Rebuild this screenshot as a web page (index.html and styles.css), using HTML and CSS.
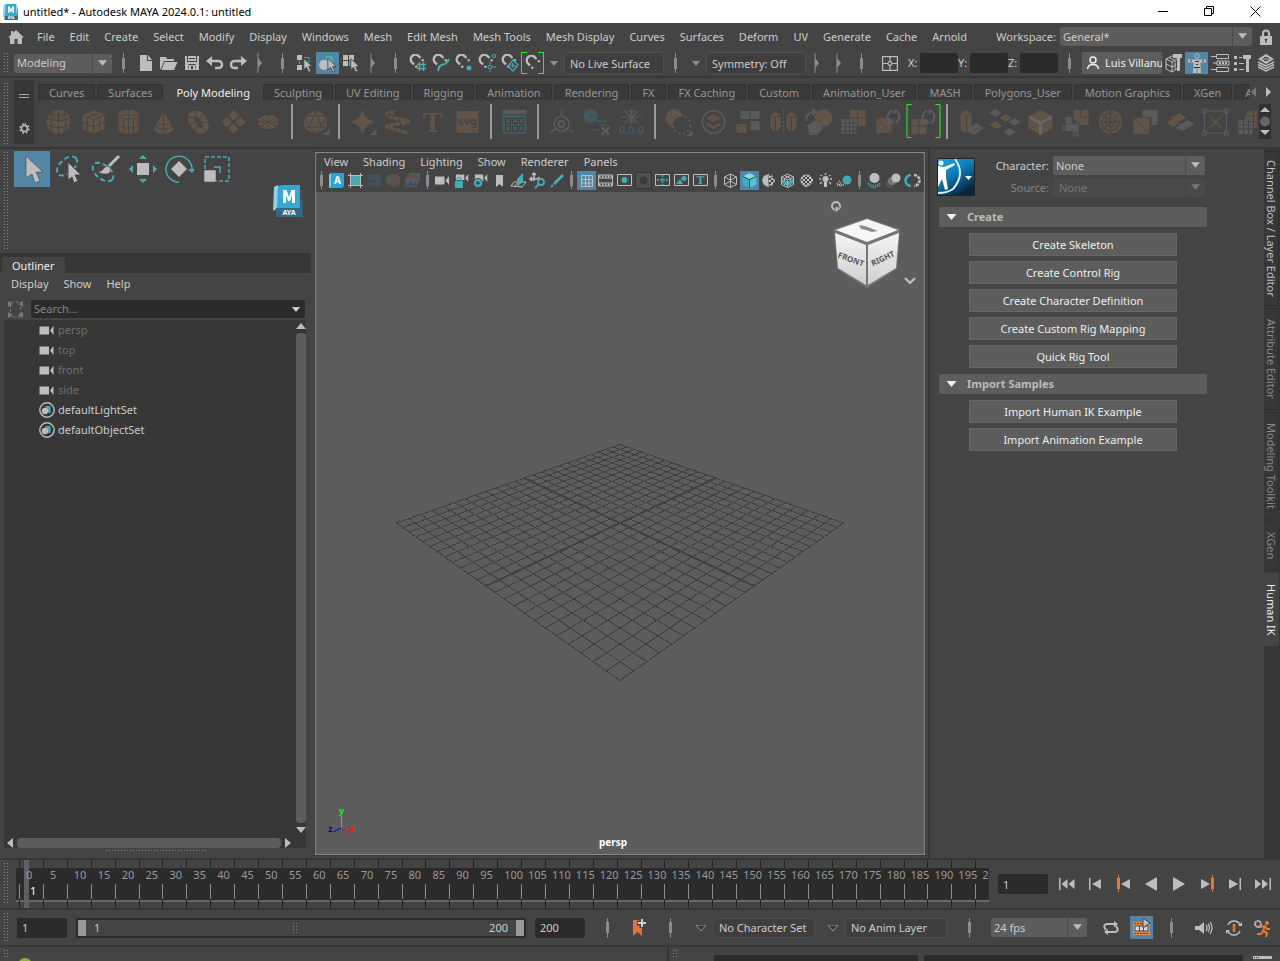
FILE: index.html
```
<!DOCTYPE html>
<html lang="en">
<head>
    <meta charset="UTF-8">
    <meta name="viewport" content="width=device-width, initial-scale=1.0">
    <title>untitled* - Autodesk MAYA 2024.0.1: untitled</title>
    <link rel="stylesheet" href="styles.css">
</head>
<body>
    <!-- Shared symbols -->
    <svg class="symbols" aria-hidden="true">
        <symbol id="down" viewBox="0 0 10 6"><path d="M0 0H10L5 6Z"/></symbol>
        <symbol id="marker" viewBox="0 0 6 20"><path d="M1 0v20" stroke="#8c8c8c"/><path d="M1 5l4 5-4 5z" fill="#8c8c8c"/></symbol>
        <symbol id="magnet" viewBox="0 0 18 18">
            <path class="ls" stroke-width="2.400" d="M5 10.500L3 8.500A4.600 4.600 0 0 1 9.500 2L11.500 4M6.500 12l1.500 1.500M13 5.500l1.500 1.500"/>
        </symbol>
        <symbol id="cursor" viewBox="0 0 12 18"><path class="lt" stroke="#444" stroke-width="1" d="M1 .5V14L4.2 11.2 6.8 17 9.4 15.8 6.8 10.3H11Z"/></symbol>
        <symbol id="camera" viewBox="0 0 15 9"><path class="lt" d="M0 0.500H9.500V8.500H0ZM10.500 4.500L14 0V9Z"/></symbol>
        <symbol id="set" viewBox="0 0 16 16"><circle class="ls" cx="8" cy="8" r="7.2" stroke-width="1.4"/><path class="tl" d="M6 4h5.500v7H9.500Z"/><circle class="lt" cx="6" cy="9" r="3.200"/></symbol>
        <symbol id="maya" viewBox="0 0 30 32">
            <path fill="#8fd0e3" d="M1 2L5 0V23L0 26Z"/><path fill="#35a7d0" d="M5 1l3-1h19v23H4Z"/><path fill="#336a87" d="M3 23H27l2-21 1 30H3Z"/>
            <path fill="#fff" d="M10 18V5h3.500L16 12l2.500-7H22V18H19V10l-2 6h-2l-2-6v8Z"/>
            <text x="16" y="29.500" text-anchor="middle" font-size="7" font-weight="700" fill="#fff">AYA</text>
        </symbol>
        <symbol id="sync" viewBox="0 0 16 16"><path class="ls" stroke-width="2" d="M6 2A7 7 0 0 0 5 14M10 14A7 7 0 0 0 11 2"/><path class="lt" d="M3 14.500l5 1V10ZM13 1.500l-5-1V6Z"/></symbol>
    </svg>

    <!-- Title bar -->
    <header class="titlebar">
        <svg class="app-logo"><use href="#maya"/></svg>
        <span class="title">untitled* - Autodesk MAYA 2024.0.1: untitled</span>
        <button class="win-btn" aria-label="Minimize"><svg width="11" height="11"><path d="M0 5.500H10" stroke="#000"/></svg></button>
        <button class="win-btn" aria-label="Restore"><svg width="11" height="11"><path d="M.5 2.500h7v7h-7zM2.500 2V.5h7v7H8" fill="none" stroke="#000"/></svg></button>
        <button class="win-btn" aria-label="Close"><svg width="11" height="11"><path d="M.5 .5l10 10M10.500 .5l-10 10" stroke="#000"/></svg></button>
    </header>

    <!-- Main menu -->
    <nav class="menubar">
        <a href="#" class="home" aria-label="Home"><svg width="16" height="14"><path class="lt" d="M8 0L16 7.500H14V14H9.500V9H6.500V14H2V7.500H0L3 4.700V1H5V2.800Z"/></svg></a>
        <button>File</button><button>Edit</button><button>Create</button><button>Select</button><button>Modify</button><button>Display</button><button>Windows</button><button>Mesh</button><button>Edit Mesh</button><button>Mesh Tools</button><button>Mesh Display</button><button>Curves</button><button>Surfaces</button><button>Deform</button><button>UV</button><button>Generate</button><button>Cache</button><button>Arnold</button>
        <label class="workspace-label" for="workspace">Workspace:</label>
        <div class="combo workspace">
            <select id="workspace"><option>General*</option></select>
            <svg class="combo-arrow"><use href="#down"/></svg>
        </div>
        <svg class="lock" width="12" height="16"><path class="ls" stroke-width="2" d="M3 8V4.500a3 3 0 0 1 6 0V8"/><path class="lt" d="M0 7H12V16H0Z"/><path d="M4.500 10h3l-1 2v2h-1v-2z" fill="#333"/></svg>
    </nav>

    <!-- Status line -->
    <div class="status-line">
        <span class="grip"></span>
        <div class="combo mode">
            <select aria-label="Menu set"><option>Modeling</option></select>
            <svg class="combo-arrow"><use href="#down"/></svg>
        </div>
        <span class="sep"></span>
        <button class="cell" aria-label="New scene"><svg width="14" height="16"><path class="lt" d="M1 0H8V6H13V16H1ZM9 0l4 5H9Z"/></svg></button>
        <button class="cell" aria-label="Open scene"><svg width="18" height="14"><path class="lt" d="M0 13V1H6L7 3H14V5H4L1 13ZM4.500 6H17.500L14 14H1.500Z"/></svg></button>
        <button class="cell" aria-label="Save scene"><svg width="14" height="14"><path class="lt" d="M0 0H2V6H12V0H14V14H0ZM3 0H11V5H3Z"/><path fill="#444" d="M3.500 8h7v5h-7zM4 2h6v1H4z"/><path class="lt" d="M4 9h6v4H8v-3H6v3H4z"/></svg></button>
        <button class="cell" aria-label="Undo"><svg width="18" height="14"><path class="ls" stroke-width="2.400" d="M5 5H12Q16 5 16 8.500T12 12H9"/><path class="lt" d="M6 0V10L0 5Z"/></svg></button>
        <button class="cell" aria-label="Redo"><svg width="18" height="14"><path class="ls" stroke-width="2.400" d="M13 5H6Q2 5 2 8.500T6 12H9"/><path class="lt" d="M12 0V10L18 5Z"/></svg></button>
        <svg class="marker"><use href="#marker"/></svg>
        <span class="sep"></span>
        <button class="cell" aria-label="Select by hierarchy"><svg width="18" height="19"><path class="lt" d="M1 1H6V6H1ZM1 11H6V16H1Z"/><path class="ts" d="M8 3.500H13V9M3.500 7v3"/><use href="#cursor" x="7" y="4" width="10" height="15"/></svg></button>
        <button class="cell active" aria-label="Select by object"><svg width="19" height="19"><path class="tl" d="M8 2h7v10H8z"/><circle class="lt" cx="6" cy="11" r="5"/><use href="#cursor" x="9" y="4" width="10" height="15"/></svg></button>
        <button class="cell" aria-label="Select by component"><svg width="18" height="19"><path class="lt" d="M1 1H6V6H1ZM7 1h5v5H7zM1 7h5v5H1z"/><path class="tl" d="M7 7h5v5H7z"/><use href="#cursor" x="8" y="4" width="10" height="15"/></svg></button>
        <svg class="marker"><use href="#marker"/></svg>
        <span class="sep"></span>
        <button class="cell" aria-label="Snap to grids"><svg width="18" height="18"><use href="#magnet"/><path class="ts" stroke-width="1.500" d="M10.500 8v9M14.500 8v9M8 10.500h9M8 14.500h9"/></svg></button>
        <button class="cell" aria-label="Snap to curves"><svg width="18" height="18"><use href="#magnet"/><path class="ts" stroke-width="2" d="M6 17Q7 11 11 10.500T17 5"/></svg></button>
        <button class="cell" aria-label="Snap to points"><svg width="18" height="18"><use href="#magnet"/><circle class="tl" cx="14" cy="14" r="2.500"/></svg></button>
        <button class="cell" aria-label="Snap to projected center"><svg width="18" height="18"><use href="#magnet"/><circle class="ts" cx="16" cy="2" r="1.700"/><circle class="ts" cx="12" cy="13" r="2"/><path class="ts" d="M12 8v2M12 16v2M7 13h2M15 13h3"/></svg></button>
        <button class="cell" aria-label="Snap to view planes"><svg width="18" height="18"><use href="#magnet"/><path class="ts" stroke-width="1.200" d="M12 6l5 5-5 6-5-5zM12 9v5M9 11l6 1"/></svg></button>
        <button class="cell live" aria-label="Make live"><svg width="18" height="18"><use href="#magnet" x="1" y="1"/></svg></button>
        <svg class="drop"><use href="#down"/></svg>
        <input class="field" type="text" value="No Live Surface" aria-label="Live surface" readonly>
        <span class="sep"></span>
        <svg class="drop"><use href="#down"/></svg>
        <input class="field" type="text" value="Symmetry: Off" aria-label="Symmetry" readonly>
        <svg class="marker"><use href="#marker"/></svg>
        <svg class="marker"><use href="#marker"/></svg>
        <span class="sep"></span>
        <button class="cell wide" aria-label="Input line mode"><svg width="16" height="15"><path class="ls" stroke-width="1.200" d="M.6 .6H15.400V14.400H.6ZM8 1V5M8 10v4M1 7.500H5.500M10.500 7.500H15M8 5L10.500 7.500 8 10 5.500 7.500Z"/></svg></button>
        <label class="axis" for="ix">X:</label><input id="ix" class="num" type="text">
        <label class="axis" for="iy">Y:</label><input id="iy" class="num" type="text">
        <label class="axis" for="iz">Z:</label><input id="iz" class="num" type="text">
        <span class="sep"></span>
        <div class="status-right">
            <button class="user"><svg width="14" height="14"><circle cx="7" cy="4" r="3" fill="none" stroke="#eee" stroke-width="1.500"/><path d="M1.500 13Q2 8.500 7 8.500T12.500 13" fill="none" stroke="#eee" stroke-width="1.500"/></svg>Luis Villanueva</button>
            <button class="cell" aria-label="Modeling toolkit"><svg width="18" height="18"><path class="ls" d="M1 5l6-3 6 2v10l-6 4-6-3zM1 5l6 3v10M7 8l5-3M4 3.500l6 3v9M1 10l6 3 4-2"/><path class="lt" d="M8 0h9v4h-2v13h-3V4H8z"/></svg></button>
            <button class="cell active" aria-label="Human IK"><svg width="18" height="20"><circle class="ls" cx="9" cy="3" r="2.200"/><path class="lt" d="M0 6.500H18V9.500H12.500V14L13 20H9.500V14H8.500V20H5L5.500 14V9.500H0Z"/><path fill="#333" d="M2 7.500h2v1H2zM14 7.500h2v1h-2zM7 8h4v1H7zM8 11h2v1H8zM6 14h6v1H6z"/></svg></button>
            <button class="cell" aria-label="Attribute editor"><svg width="18" height="18"><path class="ls" d="M0 2.500h5M5.500 .5h12v4h-12zM2 9h4M6 7h12v4H6zM0 15.500h5M5.500 13.500h12v4h-12z"/><path class="lt" d="M8 8h2v2H8zM11 8h2v2h-2zM14 8h2v2h-2z"/></svg></button>
            <button class="cell" aria-label="Tool settings"><svg width="17" height="17"><path class="lt" d="M0 1h3v3H0zM5 2h3v1H5zM9 0h8v4h-2v13h-3V4H9zM0 7h3v3H0zM5 8h5v1H5zM0 13h3v3H0zM5 14h5v1H5z"/></svg></button>
            <button class="cell" aria-label="Channel box"><svg width="18" height="18"><path class="ls" stroke-width="1.500" d="M1 8l8 4 8-4M1 10.500l8 4 8-4M1 13l8 4 8-4"/><path class="lt" d="M9 0l8 5-8 5-8-5z"/><path d="M5 5h8M7 3.500h4M7 6.500h4" stroke="#444"/></svg></button>
        </div>
    </div>

    <!-- Shelf -->
    <div class="shelf">
        <span class="grip"></span>
        <div class="shelf-side">
            <svg width="10" height="6"><path d="M0 1.500H10M0 4.500H10" stroke="#aaa"/></svg>
            <svg width="11" height="11"><circle class="ls" cx="5.500" cy="5.500" r="3" stroke-width="1.500"/><path class="ls" stroke-width="1.600" stroke-dasharray="1.600 2" d="M5.500 1a4.500 4.500 0 1 1 0 9 4.500 4.500 0 1 1 0-9"/></svg>
        </div>
        <div class="shelf-main">
            <div class="shelf-tabs">
                <div class="tab-strip">
                    <button>Curves</button><button>Surfaces</button><button class="current">Poly Modeling</button><button>Sculpting</button><button>UV Editing</button><button>Rigging</button><button>Animation</button><button>Rendering</button><button>FX</button><button>FX Caching</button><button>Custom</button><button>Animation_User</button><button>MASH</button><button>Polygons_User</button><button>Motion Graphics</button><button>XGen</button><button>Arnold</button>
                </div>
                <svg class="tab-arrows" width="24" height="10"><path fill="#777" d="M6 0V10L1 5Z"/><path class="lt" d="M16 0V10l5-5Z"/></svg>
            </div>
            <div class="shelf-row">
                <div class="shelf-icons">
                    <svg viewBox="0 0 24 24"><circle class="or" cx="12" cy="12" r="12"/><path class="cut" d="M0 8Q12 13 24 8M0 15Q12 20 24 15M2 4Q12 7 22 4M12 0V24M7 0Q2 12 7 24M17 0Q22 12 17 24"/></svg>
                    <svg viewBox="0 0 24 24"><path class="or" d="M12 0L23 5V19L12 24 1 19V5Z"/><path class="cut" d="M1 5l11 5 11-5M12 10V24M1 12l11 5 11-5M6 2.500l12 5V21M18 2.500l-12 5V21"/></svg>
                    <svg viewBox="0 0 24 24"><path class="or" d="M2 5Q2 0 12 0T22 5V19Q22 24 12 24T2 19Z"/><path class="cut" d="M2 5Q4 9 12 9T22 5M2 14Q4 18 12 18T22 14M12 0V24M7 8.500V24M17 8.500V24M4 5H20"/></svg>
                    <svg viewBox="0 0 24 24"><path class="or" d="M12 1L22 19Q20 24 12 24T2 19Z"/><path class="cut" d="M12 0V24M6 13Q12 17 18 13M4 17Q12 22 20 17"/></svg>
                    <svg viewBox="0 0 24 24"><path class="ring" d="M7 4Q14 2 18 11T14 21Q10 20 6 13T7 4Z" stroke-width="6"/><path class="cut" d="M2 8l7-1M8 0l2 7M17 4l-4 5M22 12l-7 1M19 20l-5-4M9 22l2-6M3 15l6-3"/></svg>
                    <svg viewBox="0 0 24 24"><path class="or" d="M12 0L24 12 12 24 0 12Z"/><path class="cut" stroke-width="2" d="M6 6L18 18M18 6L6 18"/></svg>
                    <svg viewBox="0 0 24 24"><ellipse class="or" cx="12" cy="12" rx="11" ry="7"/><path class="cut" d="M3 7L21 17M21 7L3 17M0 12H8M16 12h8M12 5v4M12 15v4"/></svg>
                    <span class="bar"></span>
                    <svg viewBox="0 0 24 24"><path class="or" d="M12 0L23 6V18L12 24 1 18V6Z"/><path class="cut" d="M12 0L6 17H18ZM1 6h22L18 17l5 1M1 6l5 11-5 1M6 17l6 7 6-7"/><path class="lt" d="M26 19v6h-7z"/></svg>
                    <span class="bar"></span>
                    <svg viewBox="0 0 24 24"><path class="or" d="M12 -1Q14 10 25 12 14 14 12 25 10 14 -1 12 10 10 12 -1Z"/><path class="lt" d="M26 19v6h-7z"/></svg>
                    <svg viewBox="0 0 24 24"><path class="ring" d="M9 3Q2 1 1 4T12 9 23 12 12 14 1 16 12 20 20 24" stroke-width="3.500" stroke-dasharray="5 1"/></svg>
                    <svg viewBox="0 0 24 24"><text class="or serif" x="12" y="22" text-anchor="middle" font-size="30" font-weight="700">T</text></svg>
                    <svg viewBox="0 0 24 24"><path class="or" d="M1 1h22v22H1z"/><text x="12" y="15" text-anchor="middle" font-size="11" font-weight="700" fill="#444">svg</text></svg>
                    <span class="bar"></span>
                    <svg viewBox="0 0 24 24"><path class="tl" d="M0 5h24v19H0z"/><path class="lt" d="M0 0h24v4H0z"/><path d="M3 8.500h5v5H3zM10 8.500h5v5h-5zM17 8.500h4v5h-4zM3 16h5v5H3zM10 16h5v5h-5zM17 16h4v5h-4z" fill="#555" stroke="#3b3b3b"/></svg>
                    <span class="bar"></span>
                    <svg viewBox="0 0 24 24"><path class="ts" stroke-width="2" d="M12 -1V7M8 18l-8 4M16 18l8 4"/><circle class="ls" cx="12" cy="14" r="7.500" stroke-width="1.500"/><circle class="ls" cx="12" cy="14" r="3" stroke-width="2"/></svg>
                    <svg viewBox="0 0 24 24"><circle class="tl" cx="6" cy="6" r="7"/><path d="M6 2v5h4" fill="none" stroke="#444"/><path class="ts" stroke-width="1.500" d="M12 11h11M15 15h7M6 20h8"/><path class="ls" stroke-width="2" d="M17 17l8 8M25 17l-8 8"/></svg>
                    <svg viewBox="0 0 24 24"><path class="ls" stroke-width="1.200" d="M12 -1V14M2 7H22M5 1l14 12M19 1L5 13M9 0l3 3 3-3M9 13l3-3 3 3"/><text class="tl" x="12" y="24" text-anchor="middle" font-size="11" font-weight="700">0,0,0</text></svg>
                    <span class="bar"></span>
                    <svg viewBox="0 0 24 24"><circle class="or" cx="8" cy="8" r="9"/><circle cx="15" cy="15" r="9" fill="#444" stroke="#5a5a5a" stroke-width="1.500" stroke-dasharray="3 2"/><path class="lt" d="M26 20v6h-6z"/></svg>
                    <svg viewBox="0 0 24 24"><circle class="ls" cx="12" cy="12" r="11.200" stroke-width="1.500"/><path class="or" d="M12 4l8 4-8 4-8-4z"/><path class="or" d="M12 19l-8-4 3-2 5 3 5-3 3 2z"/></svg>
                    <svg viewBox="0 0 24 24"><path class="lt" d="M4 1h9v8H4zM14 1h9v8h-9zM14 11h9v9h-9z"/><path class="or" d="M0 14h10v9H0z"/></svg>
                    <svg viewBox="0 0 24 24"><path class="or" d="M-1 5l5-3 5 3v13l-5 4-5-4zM15 5l5-3 5 3v13l-5 4-5-4z"/><path class="cut" d="M-1 5l5 3 5-3M4 8v14M15 5l5 3 5-3M20 8v14"/><path class="ls" stroke-dasharray="2 2" d="M12 -1V24"/></svg>
                    <svg viewBox="0 0 24 24"><circle class="or" cx="17" cy="8" r="9"/><path class="lt" d="M1 15l6-4 7 3 2 5-5 6H3z"/><path class="ls" stroke-width="2" d="M0 11Q-1 3 7 2"/><path class="lt" d="M6 -2l5 4-5 4z"/></svg>
                    <svg viewBox="0 0 24 24"><path class="or" d="M8 0h16v16H8z"/><path class="cut" d="M16 0v16M8 8h16"/><path class="lt" d="M0 9h15v15H0z"/><path class="cut" d="M4 9v15M8 9v15M12 9v15M0 13h15M0 17h15M0 21h15"/></svg>
                    <svg viewBox="0 0 24 24"><path class="or" d="M0 8h15v15H0z"/><path class="cut" d="M0 8l15 15"/><use href="#sync" x="9" y="-1" width="16" height="16"/></svg>
                    <svg viewBox="0 0 24 24"><path class="or" d="M0 9h15v15H0z"/><path class="cut" d="M7.500 9v15M0 16h15"/><use href="#sync" x="9" y="-1" width="16" height="16"/><path d="M0 -5.500H-4.500V27.500H0M24 -5.500h4.500V27.500h-4.500" fill="none" stroke="#1f1"/></svg>
                    <span class="bar"></span>
                    <svg viewBox="0 0 24 24"><path class="or" d="M2 3l6-3 5 3v17l-6 3-5-3z"/><path class="cut" d="M2 3l6 3 5-3M8 6v17"/><path class="lt" d="M13 16l5-3 7 5-9 7-6-3z"/><path class="cut" d="M14 22l7-6"/></svg>
                    <svg viewBox="0 0 24 24"><path class="lt" d="M-4 3l6-4 6 4-6 4zM15 12l6-4 6 4-6 4zM10 22l6-4 6 4-6 4z"/><path class="or" d="M6 8l6-4 6 4-6 4zM-4 15l6-4 7 5-6 3z"/></svg>
                    <svg viewBox="0 0 24 24"><path class="or" d="M12 0L24 6V18L12 25 0 18V6Z"/><path stroke="#666" stroke-width="3" fill="none" d="M1 7l11 6 11-6M12 13V25"/></svg>
                    <svg viewBox="0 0 24 24"><path class="or" d="M10 0h15v15H15L10 10z"/><path class="lt" d="M2 7h6v6h7v8H2z"/><path class="cut" d="M17 0v7h8M8 8l9 7M0 14h15"/><path class="ls" d="M-1 16h4v4h-4zM10 22h4v4h-4z"/></svg>
                    <svg viewBox="0 0 24 24"><circle class="ring" cx="12" cy="12" r="10.500" stroke-width="2.500"/><circle class="or" cx="12" cy="12" r="8"/><path class="cut" d="M12 0V24M0 12H24M3.500 3.500l17 17M20.500 3.500l-17 17"/><circle class="cut" cx="12" cy="12" r="5"/></svg>
                    <svg viewBox="0 0 24 24"><path class="or" d="M0 8h16v16H0z"/><path class="cut" d="M0 8l16 16"/><path class="lt" d="M9 0h15v15h-6V7H9z"/></svg>
                    <svg viewBox="0 0 24 24"><path class="or" d="M2 8l9-5 7 5-8 4zM-2 13l7-4 5 4-5 4z"/><path class="lt" d="M7 18l12-8 7 4-12 7z"/></svg>
                    <svg viewBox="0 0 24 24"><path class="ls" d="M1 1h22v22H1zM-1 -1h4v4h-4zM21 -1h4v4h-4zM-1 21h4v4h-4zM21 21h4v4h-4z"/><path class="ring" d="M6 6l12 12M18 6L6 18" stroke-width="1.500"/><path class="or" d="M10 10h4v4h-4z"/></svg>
                    <svg viewBox="0 0 24 24"><circle class="or" cx="15" cy="9" r="9"/><path class="lt" d="M0 10h14v14H0z"/><path class="cut" d="M5 10v14M10 10v14M0 15h14M0 19h14M15 0v18M6 6h18M8 12h16"/></svg>
                </div>
                <svg class="shelf-scroll" width="12" height="35"><path class="lt" d="M1 8H11L6 3ZM1 26H11L6 31Z"/><circle cx="6" cy="17.500" r="5" fill="#666"/></svg>
            </div>
        </div>
    </div>

    <main class="workarea">
        <!-- Tool box and outliner -->
        <section class="left">
            <div class="toolbox">
                <span class="grip"></span>
                <div class="tools">
                    <button class="tool active" aria-label="Select"><svg width="18" height="28"><path class="lt" stroke="#333" stroke-width=".5" d="M3 1L20 17H13L17 26 12 28 9 19 3 23Z"/></svg></button>
                    <button class="tool" aria-label="Lasso"><svg width="28" height="28"><ellipse class="ts" cx="12" cy="11" rx="12" ry="7" stroke-width="2" stroke-dasharray="5 3" transform="rotate(-42 12 11)"/><path class="lt" stroke="#444" d="M13 7L26 20H20L23 26 19 28 17 22 13 25Z"/></svg></button>
                    <button class="tool" aria-label="Paint select"><svg width="28" height="28"><ellipse class="ts" cx="11" cy="17" rx="12" ry="7" stroke-width="2" stroke-dasharray="5 3" transform="rotate(38 11 17)"/><path d="M17 11L27 1" stroke="#bdbdbd" stroke-width="3"/><path class="lt" stroke="#444" stroke-width=".5" d="M18 12Q20 19 14 19 9 19 6 17 11 16 12 13 15 10 18 12Z"/></svg></button>
                    <button class="tool" aria-label="Move"><svg width="28" height="28"><path class="lt" d="M8 8h12v12H8z"/><path class="tl" d="M14 0l4 4h-8zM14 28l4-4h-8zM0 14l4-4v8zM28 14l-4-4v8z"/></svg></button>
                    <button class="tool" aria-label="Rotate"><svg width="30" height="28"><path class="ts" stroke-width="1.500" d="M14 27.200A13 13 0 1 1 27 15"/><path class="tl" d="M23 14h7l-3 4z"/><path class="lt" d="M14 6l8 8-8 8-8-8z"/></svg></button>
                    <button class="tool" aria-label="Scale"><svg width="26" height="26"><path class="ts" stroke-width="1.500" stroke-dasharray="4 2" d="M1 1h24v24H1z"/><path class="lt" stroke="#444" stroke-width=".5" d="M0 14h12v12H0z"/><path class="ts" stroke-width="1.500" d="M10 11h6v6"/></svg></button>
                </div>
                <svg class="maya-logo"><use href="#maya"/></svg>
            </div>
            <div class="outliner">
                <div class="outliner-head"><button class="outliner-tab">Outliner</button></div>
                <div class="outliner-menu"><button>Display</button><button>Show</button><button>Help</button></div>
                <div class="search-row">
                    <svg width="16" height="17"><path d="M2.500 1h10v15h-10z" fill="none" stroke="#7a7a7a" stroke-dasharray="3 2"/><path fill="#777" d="M0 0l5 3-5 3zM15 0l-5 3 5 3zM0 11l5 3-5 3zM15 11l-5 3 5 3z"/></svg>
                    <div class="search">
                        <input type="text" placeholder="Search..." aria-label="Search">
                        <svg class="search-arrow"><use href="#down"/></svg>
                    </div>
                </div>
                <div class="tree">
                    <div class="tree-body">
                        <ul>
                            <li class="dim"><svg class="cam"><use href="#camera"/></svg>persp</li>
                            <li class="dim"><svg class="cam"><use href="#camera"/></svg>top</li>
                            <li class="dim"><svg class="cam"><use href="#camera"/></svg>front</li>
                            <li class="dim"><svg class="cam"><use href="#camera"/></svg>side</li>
                            <li><svg class="set"><use href="#set"/></svg>defaultLightSet</li>
                            <li><svg class="set"><use href="#set"/></svg>defaultObjectSet</li>
                        </ul>
                        <div class="vscroll"><svg width="10" height="6"><path class="lt" d="M0 6h10L5 0z"/></svg><span class="thumb"></span><svg width="10" height="6"><path class="lt" d="M0 0h10L5 6z"/></svg></div>
                    </div>
                    <div class="hscroll"><svg width="6" height="10"><path class="lt" d="M6 0v10L0 5z"/></svg><span class="thumb"></span><svg width="6" height="10"><path class="lt" d="M0 0v10l6-5z"/></svg></div>
                </div>
                <span class="dots"></span>
            </div>
        </section>

        <!-- Viewport panel -->
        <section class="panel">
            <div class="panel-menu"><button>View</button><button>Shading</button><button>Lighting</button><button>Show</button><button>Renderer</button><button>Panels</button></div>
            <div class="panel-icons">
                <span class="sep"></span>
                <svg viewBox="0 0 19 19"><path fill="#2fa4cf" d="M2 4l2-2h13v13l-2 2H2z"/><path fill="#7fcbe2" d="M2 4l2-2v13l-2 2z"/><text x="10.500" y="13" text-anchor="middle" font-size="10" font-weight="700" fill="#fff">A</text></svg>
                <svg viewBox="0 0 19 19"><path class="tl" d="M5 5h9v9H5z"/><path class="ls" d="M4.500 2v15M14.500 2v15M2 4.500h15M2 14.500h15"/></svg>
                <svg viewBox="0 0 19 19"><path fill="#46505c" d="M3 3h13v13H3z"/><path d="M3 10h7v6" fill="none" stroke="#3a424d"/></svg>
                <svg viewBox="0 0 19 19"><circle cx="9.500" cy="9.500" r="6.500" fill="#56524e"/><path d="M9.500 9.500V3a6.500 6.500 0 0 1 5 11z" fill="#625050"/><path d="M9.500 9.500L4 14A6.500 6.500 0 0 1 9.500 3z" fill="#4e5a50"/></svg>
                <svg viewBox="0 0 19 19"><path fill="#4d5f50" d="M6 2h11v9H6z"/><path fill="#6b4b49" d="M4 4h11v9H4z"/><path fill="#505a6e" d="M2 7h12v9H2z"/><path fill="#42495a" d="M3 15l4-5 3 3 3-2v4z"/></svg>
                <span class="sep"></span>
                <svg viewBox="0 0 19 19"><use href="#camera" x="2" y="5" width="15" height="9"/></svg>
                <svg viewBox="0 0 19 19"><use href="#camera" x="3" y="3" width="15" height="8"/><path d="M3 9h9v8H3z" fill="#444"/><path class="tl" d="M3 10h8v7H3z"/><path class="ts" stroke-width="1.500" d="M5 10V8q2-3 4 0v2"/></svg>
                <svg viewBox="0 0 19 19"><use href="#camera" x="3" y="3" width="15" height="8"/><circle cx="7" cy="12" r="5" fill="#444"/><circle class="ts" cx="7" cy="12" r="3" stroke-width="2.500"/></svg>
                <svg viewBox="0 0 19 19"><path class="lt" d="M6 4h7v12l-3.500-3L6 16z"/></svg>
                <svg viewBox="0 0 19 19"><path class="ls" d="M2 15l3-4h12l-4 5zM6 15l3-4"/><path class="tl" d="M8 8l6-6v9l-6 5z"/></svg>
                <svg viewBox="0 0 19 19"><path class="ls" stroke-width="1.500" d="M6 2v8M2 8h10M4 4l2-2 2 2M4 6L2 8l2 2M10 6l2 2"/><circle class="ts" cx="13" cy="11" r="3" stroke-width="1.800"/><path class="ts" stroke-width="1.800" d="M11 13l-4 4"/></svg>
                <svg viewBox="0 0 19 19"><path class="tl" d="M15 3l2 2-9 9-2-2zM5 13l2 2-4 2z"/></svg>
                <span class="sep"></span>
                <svg class="on" viewBox="0 0 19 19"><path class="ls" d="M4.500 4.500h11v11h-11zM8.500 4v12M12 4v12M4 8.500h12M4 12h12"/></svg>
                <svg viewBox="0 0 19 19"><path class="ls" d="M2.500 4h14v11h-14zM3 7h14M3 12h14"/><path class="ls" stroke-width="2" stroke-dasharray="1.500 1.500" d="M3 5.500h14M3 13.500h14"/></svg>
                <svg viewBox="0 0 19 19"><path class="ls" d="M2.500 3.500h14v11h-14z"/><circle class="tl" cx="9.500" cy="9" r="3"/></svg>
                <svg viewBox="0 0 19 19"><path d="M1.500 1.500h16v16h-16z" fill="#4f4f4f" stroke="#333"/><circle cx="9.500" cy="9.500" r="4" fill="#3b3b3b"/></svg>
                <svg viewBox="0 0 19 19"><path class="ls" d="M2.500 3.500h14v11h-14z"/><path class="ts" stroke-width="1.500" stroke-dasharray="2 1" d="M4 9h12M9.500 4v10"/></svg>
                <svg viewBox="0 0 19 19"><path class="ls" d="M2.500 3.500h14v11h-14z"/><path class="tl" d="M4 13l4-5 3 5z"/><circle class="tl" cx="12" cy="7.500" r="2.500"/></svg>
                <svg viewBox="0 0 19 19"><path class="ls" d="M2.500 3.500h14v11h-14z"/><text class="tl serif" x="9.500" y="13" text-anchor="middle" font-size="12" font-weight="700">T</text></svg>
                <span class="sep"></span>
                <svg viewBox="0 0 19 19"><path class="ls" d="M9.500 3l6 3v7.500l-6 3-6-3V6zM3.500 6l6 3 6-3M9.500 9v7.500M9.500 3v7l-6 3.500M9.500 10l6 3.500"/></svg>
                <svg class="on" viewBox="0 0 19 19"><path fill="#7fdce8" d="M9.500 2l7 3.500-7 3-7-3z"/><path fill="#3fb1c0" d="M2.500 5.500l7 3V17l-7-3.500z"/><path fill="#59c3d2" d="M16.500 5.500l-7 3V17l7-3.500z"/><path d="M2.500 5.500l7 3 7-3M9.500 8.500V17" fill="none" stroke="#24505c"/></svg>
                <svg viewBox="0 0 19 19"><path class="lt" d="M9.500 3.500v12a6 6 0 0 1 0-12z"/><circle class="ls" cx="9.500" cy="9.500" r="5.500" stroke-dasharray="2 2" stroke-width="1.500"/><path class="ls" stroke-width="2" stroke-dasharray="2 2" d="M11 5v9M13 7v7"/></svg>
                <svg viewBox="0 0 19 19"><path class="ls" d="M9.500 3l6 3v7.500l-6 3-6-3V6zM3.500 6l6 3 6-3M9.500 9v7.500M6.500 4.500l6 3v7M12.500 4.500l-6 3v7"/><path class="tl" d="M4 8l5 2.500v4L4 12zM15 8l-5 2.500v4l5-2.500z"/></svg>
                <svg viewBox="0 0 19 19"><circle class="ls" cx="9.500" cy="9.500" r="5.500"/><path class="ls" stroke-width="2" stroke-dasharray="2 2" d="M6 5h8M4 7h11M6 9h11M4 11h11M6 13h8M8 15h4"/></svg>
                <svg viewBox="0 0 19 19"><circle class="lt" cx="9.500" cy="8" r="3"/><path class="lt" d="M8 11h3v5H8z"/><path class="ls" stroke-width="1.300" d="M9.500 2v2M3 8h2M14 8h2M4.500 4l1.500 1M14.500 4L13 5M4 13l2-2M15 13l-2-2"/></svg>
                <svg viewBox="0 0 19 19"><circle class="tl" cx="12" cy="9" r="4.500"/><path class="ls" stroke-width="1.500" stroke-dasharray="1 1" d="M2 12l4 3M4 10l4 5M2 14h7"/></svg>
                <span class="sep"></span>
                <svg viewBox="0 0 19 19"><circle class="lt" cx="9.500" cy="7" r="5"/><path class="ts" stroke-width="1.500" stroke-dasharray="1 1" d="M3 12l6 3 7-3M3 14l6 3 7-3"/></svg>
                <svg viewBox="0 0 19 19"><circle cx="6" cy="13" r="4" fill="#555"/><circle cx="8" cy="10" r="4" fill="#777"/><circle class="lt" cx="12" cy="7" r="4.500"/></svg>
                <svg viewBox="0 0 19 19"><path class="ts" stroke-width="2.500" d="M8 4a5.500 5.500 0 0 0 0 11"/><path class="ls" stroke-width="2.500" stroke-dasharray="3 1" d="M11 4a5.500 5.500 0 0 1 0 11"/></svg>
            </div>
            <div class="viewport">
                <svg class="grid" id="grid" viewBox="0 0 608 662"></svg>
                <!-- View cube -->
                <svg class="viewcube" width="90" height="92">
                    <defs>
                        <linearGradient id="face" x1="0" y1="0" x2="0" y2="1"><stop offset="0" stop-color="#f4f4f4"/><stop offset="1" stop-color="#cfcfcf"/></linearGradient>
                    </defs>
                    <circle cx="8" cy="8" r="4" fill="none" stroke="#bdbdbd" stroke-width="2"/><path d="M7 9h5l-4 6z" fill="#bdbdbd" stroke="#5d5d5d" stroke-width=".5"/>
                    <path fill="#757575" d="M39 20L72 31 69 71 39 90 9 71 6 31Z"/>
                    <path fill="#f6f6f6" d="M39 21L70 32 39 44 8 32Z"/>
                    <path fill="url(#face)" d="M7 35L38 47V87L10 70Z"/>
                    <path fill="url(#face)" d="M71 35L40 47V87L68 70Z"/>
                    <path fill="#8b8b8b" d="M31 27l6 1 13 5-6 1-6-2-5-1z"/>
                    <text transform="translate(22 64) rotate(20)" text-anchor="middle" font-size="8" font-weight="700" fill="#555">FRONT</text>
                    <text transform="translate(56 63) rotate(-25)" text-anchor="middle" font-size="8" font-weight="700" fill="#555">RIGHT</text>
                    <path d="M77 80l5 5 5-5" fill="none" stroke="#c4c4c4" stroke-width="2"/>
                </svg>
                <!-- Axis gizmo -->
                <svg class="gizmo" width="30" height="30">
                    <path d="M14.500 9v13" stroke="#1e1"/><path d="M14 21l9 5" stroke="#e11"/><path d="M14 21l-8 4" stroke="#00c"/>
                    <text x="12" y="7" font-size="9" font-weight="700" fill="#1e1">y</text>
                    <text x="1" y="25" font-size="9" font-weight="700" fill="#00d">z</text>
                    <text x="22" y="25" font-size="9" font-weight="700" fill="#f11">x</text>
                </svg>
                <span class="camera-name">persp</span>
            </div>
        </section>

        <!-- Human IK panel -->
        <section class="right">
            <div class="character">
                <button class="hik" aria-label="Character menu"><svg width="38" height="38"><defs><linearGradient id="hik" x1="0" y1="0" x2=".6" y2="1"><stop offset="0" stop-color="#17a5e8"/><stop offset=".5" stop-color="#0f7bb4"/><stop offset="1" stop-color="#06263c"/></linearGradient></defs><path fill="url(#hik)" stroke="#222" d="M.5 .5h37v37H.5z"/><path d="M18 1Q29 16 16 31 10 35 1 35" fill="none" stroke="#d8ecf5" stroke-width="2"/><circle cx="4" cy="5" r="2.500" fill="#fff"/><path fill="#fff" d="M1 8l6 1 10-4 1 2-9 5v8l2 11-3 1-3-11-4 8V12z"/><path fill="#fff" d="M28 18h7l-3.500 4z"/></svg></button>
                <label for="character">Character:</label>
                <div class="combo"><select id="character"><option>None</option></select><svg class="combo-arrow"><use href="#down"/></svg></div>
                <label class="off" for="source">Source:</label>
                <div class="combo off"><select id="source" disabled><option>None</option></select><svg class="combo-arrow"><use href="#down"/></svg></div>
            </div>
            <h2><svg><use href="#down"/></svg>Create</h2>
            <div class="actions">
                <button>Create Skeleton</button>
                <button>Create Control Rig</button>
                <button>Create Character Definition</button>
                <button>Create Custom Rig Mapping</button>
                <button>Quick Rig Tool</button>
            </div>
            <h2><svg><use href="#down"/></svg>Import Samples</h2>
            <div class="actions">
                <button>Import Human IK Example</button>
                <button>Import Animation Example</button>
            </div>
        </section>

        <nav class="side-tabs">
            <button class="lit">Channel Box / Layer Editor</button>
            <button>Attribute Editor</button>
            <button>Modeling Toolkit</button>
            <button>XGen</button>
            <button class="current">Human IK</button>
        </nav>
    </main>

    <!-- Time slider -->
    <div class="timeline">
        <span class="grip"></span>
        <div class="track">
            <span class="playhead"></span>
            <div class="ticks" id="ticks"></div>
            <span class="frame-label">1</span>
        </div>
        <input class="num frame" type="text" value="1" aria-label="Current frame">
        <div class="playback">
            <button aria-label="Go to start"><svg width="16" height="12"><path class="lt" d="M0 0h1.500v12H0zM8.500 1v10L2.500 6zM15.500 1v10l-6-5z"/></svg></button>
            <button aria-label="Step back frame"><svg width="12" height="12"><path class="lt" d="M0 0h1.500v12H0zM12 1v10L3 6z"/></svg></button>
            <button aria-label="Step back key"><svg width="13" height="18"><path fill="#e07b3c" d="M0 3h3v11H0zM1 0h1v17H1z"/><path class="lt" d="M13 4v10L4 9z"/></svg></button>
            <button aria-label="Play backwards"><svg width="12" height="14"><path class="lt" d="M12 0v14L0 7z"/></svg></button>
            <button aria-label="Play forwards"><svg width="12" height="14"><path class="lt" d="M0 0v14l12-7z"/></svg></button>
            <button aria-label="Step forward key"><svg width="13" height="18"><path fill="#e07b3c" d="M10 3h3v11h-3zM11 0h1v17h-1z"/><path class="lt" d="M0 4v10l9-5z"/></svg></button>
            <button aria-label="Step forward frame"><svg width="12" height="12"><path class="lt" d="M10.500 0H12v12h-1.500zM0 1v10l9-5z"/></svg></button>
            <button aria-label="Go to end"><svg width="16" height="12"><path class="lt" d="M14.500 0H16v12h-1.500zM0 1v10l6-5zM7 1v10l6-5z"/></svg></button>
        </div>
    </div>

    <!-- Range slider -->
    <div class="range">
        <span class="grip"></span>
        <input class="num frame" type="text" value="1" aria-label="Animation start">
        <div class="range-bar"><span class="handle"></span><span>1</span><span class="range-grip"></span><span>200</span><span class="handle"></span></div>
        <input class="num frame" type="text" value="200" aria-label="Animation end">
        <span class="sep"></span>
        <button class="bookmark" aria-label="Add bookmark"><svg width="16" height="19"><path fill="#e07040" d="M1 2h9v16l-4.500-4L1 18z"/><path d="M10 0v10M5 5h10" stroke="#444" stroke-width="5"/><path d="M10 1v8M6 5h8" stroke="#cfcfcf" stroke-width="2"/></svg></button>
        <span class="sep"></span>
        <svg class="drop hollow"><use href="#down"/></svg>
        <input class="field" type="text" value="No Character Set" aria-label="Character set" readonly>
        <svg class="drop hollow"><use href="#down"/></svg>
        <input class="field" type="text" value="No Anim Layer" aria-label="Animation layer" readonly>
        <span class="sep"></span>
        <div class="combo fps"><select aria-label="Frame rate"><option>24 fps</option></select><svg class="combo-arrow"><use href="#down"/></svg></div>
        <div class="range-tools">
            <button aria-label="Loop"><svg width="16" height="14"><path class="ls" stroke-width="2" d="M3 9Q-1 4 4 3H12M13 5Q17 10 12 11H5"/><path class="lt" d="M11 0l4 3-4 3.500zM5 8l-4 3 4 3z"/></svg></button>
            <button class="active" aria-label="Cached playback"><svg width="19" height="19"><path fill="#e08a4c" d="M1 4h17v13H1z"/><path d="M2 5.500h15M2 15.500h15" stroke="#444" stroke-dasharray="2 1"/><path d="M3 8h13v5H3z" fill="#ddd" stroke="#444"/><path d="M7.500 8v5M11.500 8v5" stroke="#444"/><path class="lt" stroke="#444" d="M11 0l7 5-7 5z"/></svg></button>
            <span class="sep"></span>
            <button aria-label="Sound"><svg width="19" height="14"><path class="lt" d="M0 5h4l5-4v12L4 9H0z"/><path class="ls" stroke-width="1.300" d="M11 4q2 3 0 6M13 3q3 4 0 8M15 1q4 6 0 12"/></svg></button>
            <button aria-label="Auto keyframe"><svg width="16" height="16"><path class="ls" stroke-width="1.500" d="M2 5A6.500 6.500 0 0 1 14 5M14 11A6.500 6.500 0 0 1 2 11"/><path class="lt" d="M12 6h4V2zM4 10H0v4z"/><path d="M8 4v8" stroke="#e07b3c" stroke-width="2.500"/></svg></button>
            <button aria-label="Preferences"><svg width="19" height="18"><circle class="ls" cx="5" cy="5" r="3" stroke-width="2" stroke-dasharray="2 .5"/><circle cx="14" cy="4" r="2" fill="#e07b3c"/><path d="M7 8l5-1 2 3 3 0M12 7l-2 5 4 2-1 4M10 12l-2 3-4 0" fill="none" stroke="#e07b3c" stroke-width="2"/></svg></button>
        </div>
    </div>

    <!-- Command line -->
    <footer class="command">
        <span class="grip"></span>
        <svg class="mel" width="16" height="12"><circle cx="8" cy="8" r="7" fill="#8bb53a"/><path d="M4 9q4-4 8 0" fill="none" stroke="#eee" stroke-width="2"/></svg>
        <div class="command-right">
            <span class="grip"></span>
            <input class="cmd-in" type="text" aria-label="Command">
            <input class="cmd-out" type="text" aria-label="Result" readonly>
            <svg width="19" height="12"><path class="lt" d="M0 0h19v3H0z"/><path d="M1 1.500h5" stroke="#333" stroke-dasharray="1 1"/></svg>
        </div>
    </footer>

    <script src="script.js"></script>
</body>
</html>
```
FILE: styles.css
```
* {
    box-sizing: border-box;
}

body {
    margin: 0;
    height: 100vh;
    overflow: hidden;
    display: flex;
    flex-direction: column;
    background: #444;
    color: #ccc;
    font: 11px/16px "Noto Sans", "Open Sans", sans-serif;
}

button, input, select {
    font: inherit;
    color: inherit;
    background: none;
    border: 0;
    padding: 0;
    margin: 0;
    min-width: 0;
    border-radius: 0;
}

button {
    white-space: nowrap;
}

svg {
    display: block;
    flex: none;
    overflow: visible;
}

.symbols {
    position: absolute;
    width: 0;
    height: 0;
}

/* Icon colours */
.lt { fill: #bdbdbd; }
.tl { fill: #46a9b6; }
.or { fill: #625347; }
.ring { fill: none; stroke: #625347; }
.ls { fill: none; stroke: #bdbdbd; }
.ts { fill: none; stroke: #46a9b6; }
.cut { fill: none; stroke: #444; }
.serif { font-family: "Liberation Serif", serif; }

/* Common pieces */
.grip {
    width: 5px;
    flex: none;
    align-self: stretch;
    margin: 3px 6px 3px 3px;
    background:
        linear-gradient(90deg, #444 2px, transparent 2px) -1px 0 / 3px 3px,
        linear-gradient(#8a8a8a 1px, #444 1px) 0 0 / 3px 3px;
}

.sep {
    width: 22px;
    height: 20px;
    flex: none;
    background:
        linear-gradient(#8c8c8c, #8c8c8c) center / 1px 20px no-repeat,
        linear-gradient(#8c8c8c, #8c8c8c) center / 3px 11px no-repeat;
}

.marker {
    width: 22px;
    height: 20px;
}

.drop {
    width: 20px;
    height: 5px;
    fill: #8c8c8c;
}

.drop.hollow {
    fill: #333;
    stroke: #999;
}

.combo {
    position: relative;
    height: 19px;
    background: #5d5d5d;
    border-radius: 2px;
}

.combo select {
    appearance: none;
    width: 100%;
    height: 100%;
    padding: 0 24px 0 3px;
    display: block;
}

.combo-arrow {
    position: absolute;
    top: 0;
    right: 0;
    width: 20px;
    height: 100%;
    padding: 6px 5px 7px;
    border-left: 1px solid #4b4b4b;
    fill: #bdbdbd;
    pointer-events: none;
}

.field {
    width: 100px;
    height: 22px;
    padding: 0 5px;
    border: 1px solid #4e4e4e;
    border-radius: 3px;
    background: #3e3e3e;
}

.num {
    width: 38px;
    height: 20px;
    background: #2b2b2b;
    border-radius: 2px;
}

/* Title bar */
.titlebar {
    height: 23px;
    flex: none;
    display: flex;
    align-items: center;
    background: #fff;
    color: #000;
    padding-left: 3px;
}

.app-logo {
    width: 15px;
    height: 16px;
    margin-right: 5px;
}

.title {
    flex: 1;
    white-space: nowrap;
}

.win-btn {
    width: 46px;
    height: 22px;
    display: flex;
    justify-content: center;
    align-items: center;
}

.win-btn:last-child {
    margin-right: 2px;
}

/* Menu bar */
.menubar {
    height: 27px;
    flex: none;
    display: flex;
    align-items: center;
    gap: 15px;
    padding: 0 8px;
}

.home {
    margin-right: -2px;
}

.workspace-label {
    margin-left: auto;
    margin-right: -11px;
}

.workspace {
    width: 192px;
    margin-right: -7px;
}

/* Status line */
.status-line {
    height: 28px;
    flex: none;
    display: flex;
    align-items: center;
    border-bottom: 2px solid #373737;
}

.mode {
    width: 98px;
    flex: none;
}

.cell {
    width: 23px;
    height: 22px;
    flex: none;
    display: flex;
    justify-content: center;
    align-items: center;
}

.cell.wide {
    width: 36px;
}

.active {
    background: #5285a6;
}

.live {
    background:
        linear-gradient(#1f1, #1f1) 0 0 / 5px 1px no-repeat,
        linear-gradient(#1f1, #1f1) 100% 0 / 5px 1px no-repeat,
        linear-gradient(#1f1, #1f1) 0 100% / 5px 1px no-repeat,
        linear-gradient(#1f1, #1f1) 100% 100% / 5px 1px no-repeat;
    border: solid #1f1;
    border-width: 0 1px;
}

.axis {
    width: 12px;
    flex: none;
}

.status-right {
    margin-left: auto;
    padding-right: 3px;
    display: flex;
}

.user {
    width: 80px;
    height: 22px;
    padding-left: 4px;
    display: flex;
    align-items: center;
    gap: 5px;
    overflow: hidden;
    background: #5d5d5d;
    color: #eee;
}

/* Shelf */
.shelf {
    height: 71px;
    flex: none;
    display: flex;
    padding-top: 2px;
    border-bottom: 2px solid #373737;
}

.shelf-side {
    width: 20px;
    height: 64px;
    display: flex;
    flex-direction: column;
    align-items: center;
    justify-content: space-between;
    padding: 13px 0 10px;
    background: #373737;
}

.shelf-main {
    flex: 1;
    min-width: 0;
    padding-left: 4px;
}

.shelf-tabs {
    height: 20px;
    display: flex;
    align-items: center;
    padding: 4px 6px 0 0;
}

.tab-strip {
    flex: 1;
    min-width: 0;
    display: flex;
    gap: 2px;
    overflow: hidden;
}

.tab-strip button {
    height: 16px;
    flex: none;
    padding: 0 10px;
    background: #3a3a3a;
    border: 1px solid #323232;
    border-bottom: 0;
    border-radius: 2px 2px 0 0;
    color: #969696;
    line-height: 15px;
}

.tab-strip .current {
    background: #444;
    border-color: #444;
    color: #eee;
}

.shelf-row {
    display: flex;
    align-items: center;
    height: 43px;
}

.shelf-icons {
    flex: 1;
    min-width: 0;
    height: 43px;
    display: flex;
    align-items: center;
    padding-left: 3px;
    overflow: hidden;
}

.shelf-icons svg {
    width: 35px;
    height: 24px;
}

.shelf-icons .lt { fill: #5a5a5a; }
.shelf-icons .ls { stroke: #5c5c5c; }
.shelf-icons .tl { fill: #405b5f; }
.shelf-icons .ts { stroke: #405b5f; }

#sync .lt { fill: #5a5a5a; }
#sync .ls { stroke: #5c5c5c; }

.bar {
    width: 2px;
    height: 35px;
    flex: none;
    margin: 0 5px;
    background: #999;
}

.shelf-scroll {
    margin: 0 9px 0 2px;
    background: #303030;
}

/* Work area */
.workarea {
    flex: 1;
    min-height: 0;
    display: flex;
}

.left {
    width: 311px;
    flex: none;
    display: flex;
    flex-direction: column;
}

.toolbox {
    height: 104px;
    flex: none;
    display: flex;
}

.tools {
    display: flex;
    padding: 2px 0 0;
    gap: 1px;
}

.tool {
    width: 36px;
    height: 36px;
    display: flex;
    justify-content: center;
    align-items: center;
}

.maya-logo {
    width: 30px;
    height: 32px;
    margin: 36px 8px 0 auto;
}

.outliner {
    flex: 1;
    min-height: 0;
    display: flex;
    flex-direction: column;
}

.outliner-head {
    background: #373737;
    padding: 4px 2px 0;
}

.outliner-tab {
    display: block;
    height: 16px;
    padding: 1px 10px 0;
    background: #444;
    border-radius: 2px 2px 0 0;
    color: #eee;
}

.outliner-menu {
    display: flex;
    gap: 15px;
    padding: 3px 11px 8px;
}

.search-row {
    display: flex;
    align-items: center;
    gap: 7px;
    padding: 0 6px 2px 8px;
}

.search {
    flex: 1;
    height: 18px;
    display: flex;
    align-items: center;
    background: #2b2b2b;
    border-radius: 2px;
}

.search input {
    flex: 1;
    padding: 0 3px;
}

.search input::placeholder {
    color: #888;
}

.search-arrow {
    width: 10px;
    height: 5px;
    margin-right: 4px;
    fill: #ccc;
}

.tree {
    flex: 1;
    min-height: 0;
    display: flex;
    flex-direction: column;
    margin: 0 5px 0 4px;
    background: #373737;
}

.tree-body {
    flex: 1;
    min-height: 0;
    display: flex;
}

.tree ul {
    flex: 1;
    list-style: none;
    margin: 0;
    padding: 0 0 0 35px;
}

.tree li {
    height: 20px;
    display: flex;
    align-items: center;
    gap: 3px;
}

.tree .dim {
    color: #6f6f6f;
}

.cam, .set {
    width: 16px;
    height: 16px;
}

.cam {
    height: 9px;
}

.thumb {
    flex: 1;
    background: #5d5d5d;
    border-radius: 4px;
}

.vscroll {
    display: flex;
    flex-direction: column;
    align-items: center;
    gap: 4px;
    padding: 3px 0 5px;
}

.vscroll .thumb {
    width: 10px;
}

.hscroll {
    display: flex;
    align-items: center;
    gap: 4px;
    padding: 0 15px 0 3px;
}

.hscroll .thumb {
    height: 10px;
}

.dots {
    width: 100px;
    height: 1px;
    margin: 2px auto 7px;
    background: repeating-linear-gradient(90deg, #8a8a8a 0 1px, transparent 1px 3px);
}

/* Viewport */
.panel {
    flex: 1;
    min-width: 0;
    display: flex;
    flex-direction: column;
    margin: 3px 3px 3px 4px;
    border: 1px solid #858585;
    outline: 1px solid #3a3a3a;
}

.panel-menu {
    display: flex;
    gap: 15px;
    padding: 1px 8px;
}

.panel-icons {
    height: 21px;
    flex: none;
    display: flex;
    align-items: flex-start;
    overflow: hidden;
}

.panel-icons svg {
    width: 19px;
    height: 19px;
}

.panel-icons .sep {
    width: 11px;
    height: 18px;
}

.panel-icons .on {
    background: #5285a6;
}

.viewport {
    flex: 1;
    min-height: 0;
    position: relative;
    background: #5d5d5d;
}

.grid {
    width: 100%;
    height: 100%;
    stroke: #404040;
    shape-rendering: crispEdges;
}

.viewcube {
    position: absolute;
    top: 6px;
    right: 6px;
}

.gizmo {
    position: absolute;
    left: 11px;
    bottom: 17px;
}

.camera-name {
    position: absolute;
    left: 0;
    right: 14px;
    bottom: 4px;
    text-align: center;
    font-size: 10px;
    font-weight: 700;
    color: #fff;
}

/* Human IK */
.right {
    width: 336px;
    flex: none;
    padding: 7px 57px 0 9px;
    border-left: 2px solid #373737;
}

.character {
    display: grid;
    grid-template-columns: 40px 1fr 152px;
    gap: 3px 4px;
    align-items: center;
    margin: 0 2px 10px -2px;
    text-align: right;
}

.hik {
    grid-row: 1 / 3;
}

.off {
    color: #858585;
}

.combo.off {
    background: #4a4a4a;
    color: #777;
}

.off .combo-arrow {
    fill: #777;
    border-color: #444;
}

.off select {
    padding-left: 6px;
    opacity: 1;
}

.right h2 {
    height: 20px;
    margin: 0 0 6px;
    display: flex;
    align-items: center;
    gap: 10px;
    padding-left: 7px;
    background: #5d5d5d;
    border-radius: 2px;
    font-size: 11px;
    color: #bbb;
}

.right h2 svg {
    width: 11px;
    height: 6px;
    fill: #eee;
}

.actions {
    display: flex;
    flex-direction: column;
    gap: 5px;
    margin: 0 30px 6px;
}

.actions button {
    height: 23px;
    background: #5d5d5d;
    border: 1px solid #676767;
    color: #eee;
}

.side-tabs {
    width: 16px;
    flex: none;
    display: flex;
    flex-direction: column;
    gap: 2px;
    padding: 2px 1px 0 0;
    background: #373737;
}

.side-tabs button {
    writing-mode: vertical-rl;
    width: 15px;
    padding: 10px 0;
    border: 1px solid #2e2e2e;
    border-left: 0;
    border-radius: 0 2px 2px 0;
    color: #8a8a8a;
    line-height: 14px;
}

.side-tabs .lit {
    padding: 8px 0;
    color: #c0c0c0;
}

.side-tabs .current {
    background: #444;
    border-color: #444;
    color: #eee;
}

/* Time slider */
.timeline {
    height: 50px;
    flex: none;
    display: flex;
    align-items: center;
    border-top: 2px solid #373737;
}

.track {
    flex: 1;
    min-width: 0;
    height: 48px;
    position: relative;
    overflow: hidden;
    margin-left: 2px;
    background: linear-gradient(#444 8px, #2b2b2b 8px 40px, #666 40px 42px, #444 42px);
}

.playhead {
    position: absolute;
    top: 0;
    bottom: 0;
    left: 8px;
    width: 5px;
    background: #606060;
}

.frame-label {
    position: absolute;
    left: 14px;
    top: 23px;
    color: #fff;
}

.ticks {
    position: relative;
    display: flex;
    padding-left: 3px;
}

.tick {
    flex: none;
    width: 2.465%;
    height: 48px;
    padding: 7px 0 0 7px;
    color: #9a9a9a;
    background:
        linear-gradient(#222 8px, transparent 8px 24px, #8c8c8c 24px 39px, transparent 39px 40px, #222 40px) 0 0 / 1px 48px no-repeat;
}

.frame {
    width: 50px;
    padding: 0 5px;
    margin-left: 9px;
    flex: none;
}

.playback {
    display: flex;
    padding: 0 3px 0 5px;
}

.playback button {
    width: 28px;
    height: 20px;
    display: flex;
    justify-content: center;
    align-items: center;
}

/* Range slider */
.range {
    height: 39px;
    flex: none;
    display: flex;
    align-items: center;
    border: solid #373737;
    border-width: 2px 0;
}

.range .grip + .frame {
    margin-left: 3px;
}

.range-bar {
    width: 450px;
    height: 20px;
    flex: none;
    display: flex;
    align-items: center;
    gap: 8px;
    margin-left: 9px;
    border: 2px solid #2b2b2b;
    border-radius: 2px;
}

.handle {
    width: 8px;
    height: 16px;
    background: #999;
}

.range-grip {
    width: 4px;
    height: 10px;
    margin: 0 auto;
    background:
        linear-gradient(90deg, #444 2px, transparent 2px) -2px 0 / 3px 3px,
        linear-gradient(#8a8a8a 1px, #444 1px) 0 0 / 3px 3px;
}

.range .sep {
    width: 44px;
}

.bookmark {
    width: 22px;
    display: flex;
    justify-content: center;
}

.range .drop {
    width: 24px;
    height: 6px;
}

.range .field + .drop {
    margin-left: 6px;
}

.range .bookmark + .sep {
    width: 38px;
}

.range .field {
    width: 102px;
    height: 20px;
}

.fps {
    width: 96px;
    flex: none;
}

.range-tools {
    margin-left: auto;
    display: flex;
    align-items: center;
    padding-right: 3px;
}

.range-tools button {
    width: 29px;
    height: 23px;
    display: flex;
    justify-content: center;
    align-items: center;
}

.range-tools .active {
    width: 23px;
    margin-left: 5px;
}

.range-tools .sep {
    width: 37px;
}

/* Command line */
.command {
    height: 14px;
    flex: none;
    display: flex;
    overflow: hidden;
}

.command .grip {
    height: 9px;
}

.mel {
    margin: 10px 0 0 3px;
}

.command-right {
    width: 613px;
    margin-left: auto;
    display: flex;
    align-items: flex-start;
    border-left: 2px solid #373737;
}

.cmd-in, .cmd-out {
    height: 20px;
    margin-top: 8px;
    background: #2b2b2b;
    border-radius: 2px;
}

.cmd-in {
    width: 204px;
    margin-left: 31px;
}

.cmd-out {
    flex: 1;
    margin-left: 6px;
}

.command-right > svg {
    margin: 9px 8px 0 10px;
}
```
FILE: script.js
```
// Perspective grid: 12 units each way from the origin
const grid = document.getElementById('grid');

function project(u, v) {
    const depth = (u + v) / 2;
    const side = (u - v) / 2;
    const w = 1 - 0.3347 * depth;
    return [304 + 223.5 * side / w, 331 + 104.8 * depth / w];
}

function addLine(a, b, width) {
    const line = document.createElementNS('http://www.w3.org/2000/svg', 'line');
    line.setAttribute('x1', a[0]);
    line.setAttribute('y1', a[1]);
    line.setAttribute('x2', b[0]);
    line.setAttribute('y2', b[1]);
    line.setAttribute('stroke-width', width);
    grid.appendChild(line);
}

for (let i = -12; i <= 12; i++) {
    const k = i / 12;
    const width = i === 0 ? 2 : 1;
    addLine(project(k, -1), project(k, 1), width);
    addLine(project(-1, k), project(1, k), width);
}

// Time slider labels
const ticks = document.getElementById('ticks');
for (let frame = 0; frame <= 200; frame += 5) {
    const tick = document.createElement('span');
    tick.className = 'tick';
    tick.textContent = frame;
    ticks.appendChild(tick);
}
```
